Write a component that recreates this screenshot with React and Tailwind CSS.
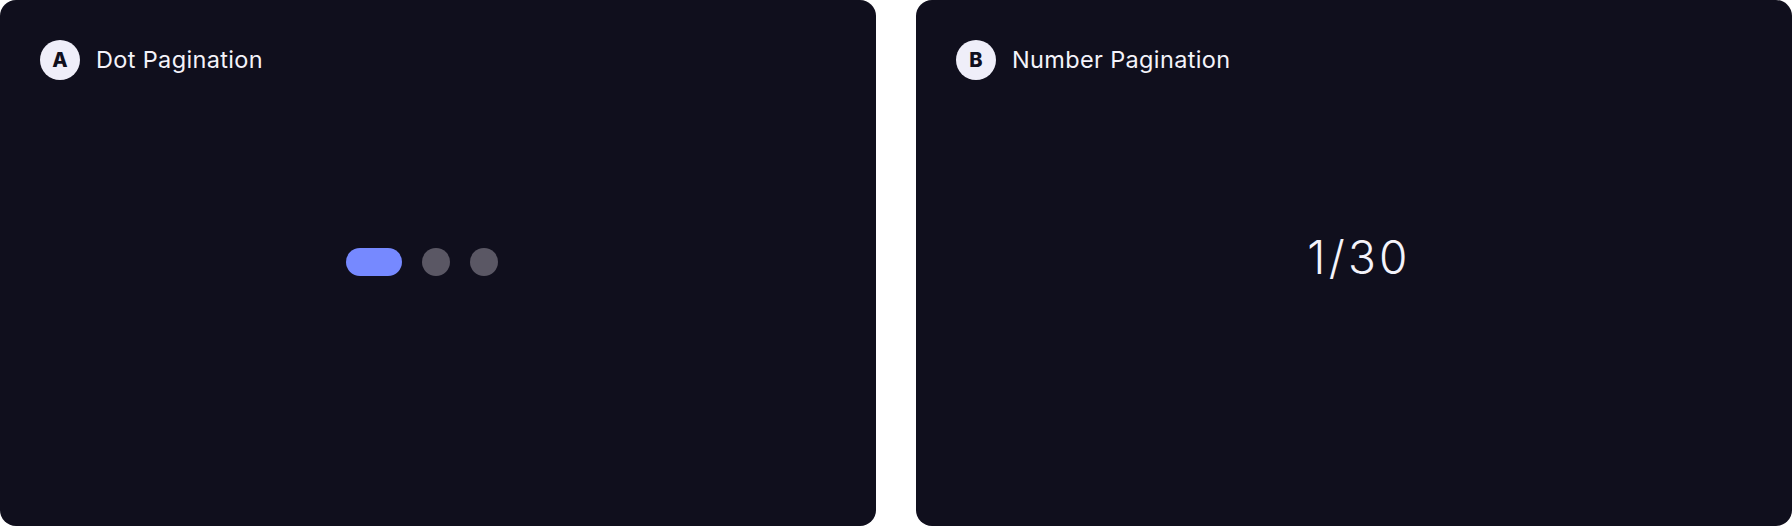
import React from 'react';

const Badge = ({ letter }) => (
  <div className="flex h-10 w-10 items-center justify-center rounded-full bg-[#efeef9] text-[20px] font-extrabold text-[#100f1d]">
    {letter}
  </div>
);

const Card = ({ letter, title, children }) => (
  <div className="flex h-[526px] w-[876px] flex-col rounded-2xl bg-[#100f1d]">
    <div className="flex items-center gap-4 pl-10 pt-10">
      <Badge letter={letter} />
      <span className="text-[23.5px] tracking-[0.015em] text-[#f4f3fa]">{title}</span>
    </div>
    {children}
  </div>
);

export default function App() {
  return (
    <div className="flex h-[526px] w-[1792px] gap-10 bg-white" style={{ fontFamily: 'Inter, "Noto Sans", sans-serif' }}>
      <Card letter="A" title="Dot Pagination">
        <div className="flex items-center gap-5 pl-[346px] pt-[168px]">
          <div className="h-7 w-14 rounded-full bg-[#7689ff]" />
          <div className="h-7 w-7 rounded-full bg-[#5a5764]" />
          <div className="h-7 w-7 rounded-full bg-[#5a5764]" />
        </div>
      </Card>
      <Card letter="B" title="Number Pagination">
        <div className="flex justify-center pl-[10px] pt-[143px]">
          <span className="text-[46px] font-light tracking-[0.07em] text-[#f4f3fa]">1/30</span>
        </div>
      </Card>
    </div>
  );
}
